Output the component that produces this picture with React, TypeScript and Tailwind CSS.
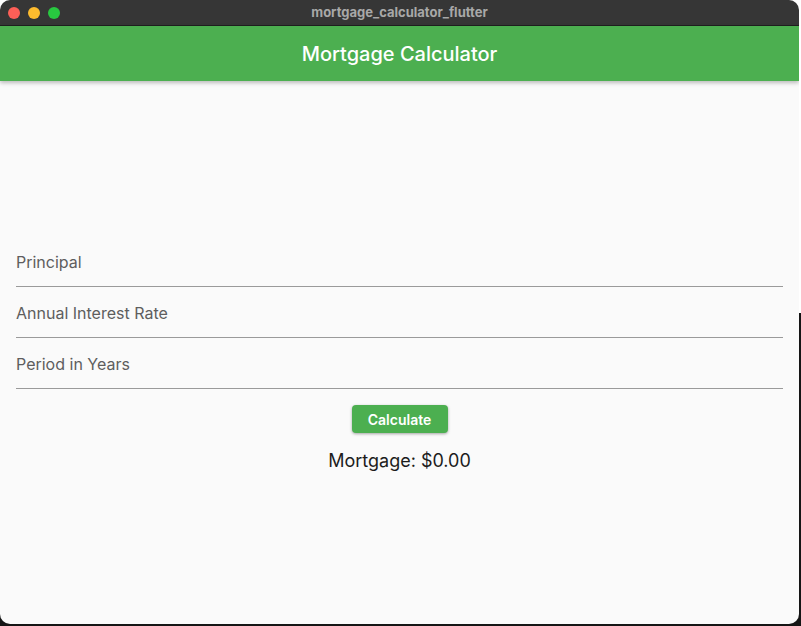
import React from "react";

const fields = ["Principal", "Annual Interest Rate", "Period in Years"];

export default function App() {
  return (
    <div
      className="w-[801px] h-[626px] bg-[linear-gradient(to_bottom,#ffffff_50%,#151515_50%)]"
      style={{ fontFamily: "Inter, 'Noto Sans', sans-serif" }}
    >
      <div className="w-[799px] h-[624px] rounded-[10px] overflow-hidden bg-[#fafafa] flex flex-col">
        {/* title bar */}
        <div className="h-[26px] bg-[#363636] border-b border-[#1f1f1f] flex items-center relative">
          <div className="flex gap-2 pl-[8px]">
            <span className="w-3 h-3 rounded-full bg-[#fe5f57]" />
            <span className="w-3 h-3 rounded-full bg-[#febc2e]" />
            <span className="w-3 h-3 rounded-full bg-[#28c840]" />
          </div>
          <div className="absolute inset-0 flex items-center justify-center text-[13px] font-bold text-[#a8a8a8]">
            mortgage_calculator_flutter
          </div>
        </div>

        {/* app bar */}
        <div className="h-[55px] bg-[#4caf50] flex items-center justify-center shadow-[0_2px_4px_rgba(0,0,0,0.25)] relative z-10">
          <span className="text-white text-[20px] font-medium">Mortgage Calculator</span>
        </div>

        {/* body */}
        <div className="flex-1 flex flex-col justify-center px-4 pt-[4px]">
          {fields.map((f) => (
            <div key={f} className="h-[51px] border-b border-[#9a9a9a] pt-[14px]">
              <span className="text-[16px] leading-5 text-[#5e5e5e]">{f}</span>
            </div>
          ))}
          <div className="flex flex-col items-center">
            <button className="mt-4 w-24 h-7 rounded bg-[#4caf50] text-white text-[14px] font-semibold shadow-[0_1px_3px_rgba(0,0,0,0.35)]">
              Calculate
            </button>
            <div className="mt-[16px] text-[18px] leading-6 text-[#1c1c1c]">Mortgage: $0.00</div>
          </div>
        </div>
      </div>
    </div>
  );
}
